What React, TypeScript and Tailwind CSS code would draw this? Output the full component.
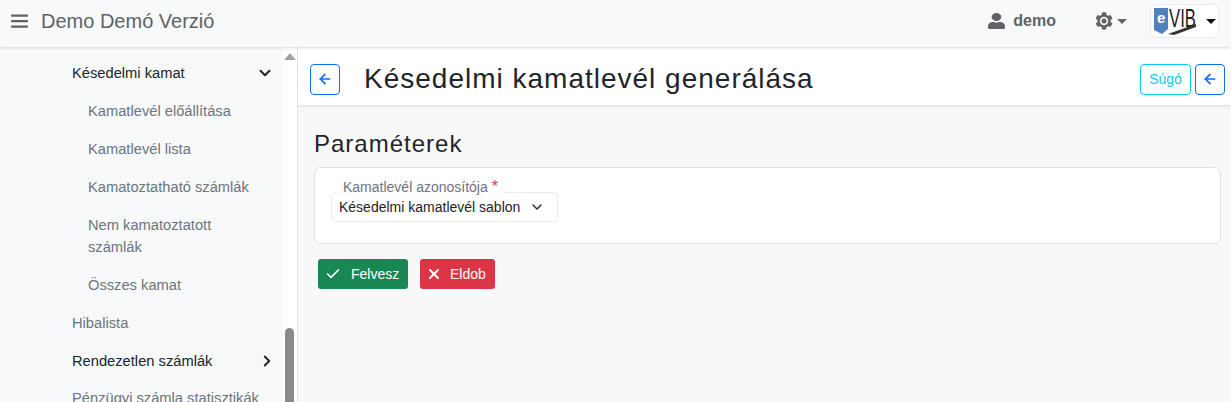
import { ArrowLeft, Check, ChevronDown, ChevronRight, X } from 'lucide-react';

const font = { fontFamily: '"Liberation Sans", Arial, sans-serif' };

const Logo = () => (
    <svg width="44" height="28" viewBox="0 0 44 28">
        <polygon points="0,1 14,1 14,22 8,27 0,23" fill="#4f81bd" />
        <text x="3" y="16" fontSize="15" fontWeight="700" fill="#fff" fontFamily="Liberation Sans">e</text>
        <text x="15" y="20" fontSize="25" fill="#222" fontFamily="Liberation Sans" textLength="27" lengthAdjust="spacingAndGlyphs">VIB</text>
        <polygon points="14,27 42,17 42,20 20,28" fill="#333" />
    </svg>
);

const GearIcon = () => (
    <svg width="18" height="18" viewBox="0 0 512 512" fill="#5f6266">
        <path fillRule="evenodd" d="M487 315l-42-25c4-23 4-46 0-69l42-25c5-3 7-8 6-14-11-35-30-67-54-94-4-4-10-5-15-2l-42 25c-18-15-38-27-60-35V28c0-6-4-11-10-12-36-8-73-8-108 0-6 1-10 6-10 12v48c-22 8-42 20-60 35L92 86c-5-3-11-2-15 2-24 27-43 59-54 94-1 6 1 11 6 14l42 25c-4 23-4 46 0 69l-42 25c-5 3-7 8-6 14 11 35 30 67 54 94 4 4 10 5 15 2l42-25c18 15 38 27 60 35v48c0 6 4 11 10 12 36 8 73 8 108 0 6-1 10-6 10-12v-48c22-8 42-20 60-35l42 25c5 3 11 2 15-2 24-27 43-59 54-94 1-6-1-11-6-14zM256 376a120 120 0 1 1 0-240 120 120 0 0 1 0 240z" />
        <circle cx="256" cy="256" r="72" />
    </svg>
);

const UserIcon = () => (
    <svg width="17" height="16" viewBox="0 0 448 512" fill="#5f6266" preserveAspectRatio="none">
        <path d="M224 256a128 128 0 1 0 0-256 128 128 0 0 0 0 256zm90 32h-17a174 174 0 0 1-146 0h-17C60 288 0 348 0 422v42c0 27 21 48 48 48h352c27 0 48-21 48-48v-42c0-74-60-134-134-134z" />
    </svg>
);

const MenuIcon = () => (
    <svg width="17" height="14" viewBox="0 0 17 14" fill="#5f6266">
        <rect x="0" y="0.5" width="17" height="2.2" rx="0.8" />
        <rect x="0" y="6" width="17" height="2.2" rx="0.8" />
        <rect x="0" y="11.5" width="17" height="2.2" rx="0.8" />
    </svg>
);

const App = () => {
    return (
        <div className="w-[1231px] h-[402px] overflow-hidden flex flex-col bg-[#f8f8f8]" style={font}>
            <header className="h-[47px] shrink-0 z-10 bg-[#f8f9fa] shadow-[0_1px_3px_rgba(0,0,0,0.14)] flex items-center pl-[11px] pr-[12px] pb-[5px]">
                <MenuIcon />
                <span className="ml-[13px] text-[20px] text-[#5f6266]">Demo Demó Verzió</span>
                <div className="ml-auto flex items-center">
                    <UserIcon />
                    <span className="ml-[8px] text-[16px] font-bold text-[#5f6266]">demo</span>
                    <span className="ml-[39px] mr-[4px] flex"><GearIcon /></span>
                    <span className="w-0 h-0 border-x-[5px] border-x-transparent border-t-[5px] border-t-[#5f6266]" />
                    <div className="ml-[23px] w-[69px] h-[34px] bg-white border border-[#e9ecef] rounded-[6px] flex items-center pl-[3px] gap-[8px]">
                        <Logo />
                        <span className="w-0 h-0 border-x-[5px] border-x-transparent border-t-[5px] border-t-[#111]" />
                    </div>
                </div>
            </header>

            <div className="flex flex-1 min-h-0">
                <aside className="relative w-[298px] shrink-0 bg-white border-r border-[#dee2e6] overflow-hidden">
                    <div className="w-[283px] h-full bg-[#f8f9fa] text-[14.7px] pt-[10px] pl-[72px] pr-[9px] leading-[22px]">
                        <div className="h-[32px] mb-[3px] flex items-center justify-between text-[#212529]">
                            Késedelmi kamat
                            <ChevronDown className="w-[18px] h-[18px]" strokeWidth={2.6} />
                        </div>
                        <div className="pl-[16px] text-[#6c757d]">
                            <div className="h-[38px] flex items-center">Kamatlevél előállítása</div>
                            <div className="h-[38px] flex items-center">Kamatlevél lista</div>
                            <div className="h-[38px] flex items-center">Kamatoztatható számlák</div>
                            <div className="pt-[7.5px] pb-[8.5px] w-[150px]">Nem kamatoztatott számlák</div>
                            <div className="h-[37px] flex items-center">Összes kamat</div>
                        </div>
                        <div className="h-[39px] flex items-center text-[#6c757d]">Hibalista</div>
                        <div className="h-[37px] flex items-center justify-between text-[#212529]">
                            Rendezetlen számlák
                            <ChevronRight className="w-[18px] h-[18px] mr-[-2px]" strokeWidth={2.6} />
                        </div>
                        <div className="h-[37px] flex items-center text-[#6c757d] whitespace-nowrap">Pénzügyi számla statisztikák</div>
                    </div>
                    <span className="absolute left-[284px] top-[6px] w-0 h-0 border-x-[6px] border-x-transparent border-b-[7px] border-b-[#a3a3a3]" />
                    <div className="absolute left-[285px] top-[281px] w-[9px] h-[80px] rounded-[5px] bg-[#8a8a8a]" />
                </aside>

                <main className="flex-1 min-w-0">
                    <div className="h-[58px] pt-[6px] bg-white shadow-[0_1px_3px_rgba(0,0,0,0.12)] flex items-center pl-[12px] pr-[6px]">
                        <button className="w-[30px] h-[31px] border border-[#0d6efd] rounded-[4px] flex items-center justify-center text-[#0d6efd]">
                            <ArrowLeft className="w-[16px] h-[16px]" strokeWidth={2.6} />
                        </button>
                        <h1 className="ml-[24px] text-[28px] tracking-[1px] text-[#212529]">Késedelmi kamatlevél generálása</h1>
                        <button className="ml-auto w-[51px] h-[31px] border border-[#0dcaf0] rounded-[4px] text-[14px] text-[#0dcaf0]">Súgó</button>
                        <button className="ml-[4px] w-[30px] h-[31px] border border-[#0d6efd] rounded-[4px] flex items-center justify-center text-[#0d6efd]">
                            <ArrowLeft className="w-[16px] h-[16px]" strokeWidth={2.6} />
                        </button>
                    </div>

                    <div className="pl-[16px] pr-[10px]">
                        <h2 className="mt-[23px] text-[24px] leading-[32px] tracking-[1px] text-[#212529]">Paraméterek</h2>
                        <div className="relative mt-[7px] h-[77px] bg-white border border-[#dee2e6] rounded-[6px] pl-[16px] pt-[24px]">
                            <div className="w-[227px] h-[30px] border border-[#e9ecef] rounded-[4px] flex items-center justify-between pl-[7px] pr-[12px] text-[14px] text-[#212529]">
                                Késedelmi kamatlevél sablon
                                <ChevronDown className="w-[16px] h-[16px]" strokeWidth={2} />
                            </div>
                            <span className="absolute left-[23px] top-[10px] h-[18px] bg-white px-[5px] text-[14px] leading-[19px] text-[#6c757d] whitespace-nowrap">
                                Kamatlevél azonosítója <span className="text-[16px] leading-[16px] text-[#dc3545]">*</span>
                            </span>
                        </div>
                        <div className="mt-[15px] ml-[4px] flex gap-[12px]">
                            <button className="w-[90px] h-[30px] bg-[#198754] rounded-[3px] flex items-center pl-[7px] text-[14px] text-white">
                                <Check className="w-[16px] h-[16px]" strokeWidth={2.6} />
                                <span className="ml-[10px]">Felvesz</span>
                            </button>
                            <button className="w-[75px] h-[30px] bg-[#dc3545] rounded-[3px] flex items-center pl-[6px] text-[14px] text-white">
                                <X className="w-[16px] h-[16px]" strokeWidth={2.8} />
                                <span className="ml-[8px]">Eldob</span>
                            </button>
                        </div>
                    </div>
                </main>
            </div>
        </div>
    );
};

export default App;
